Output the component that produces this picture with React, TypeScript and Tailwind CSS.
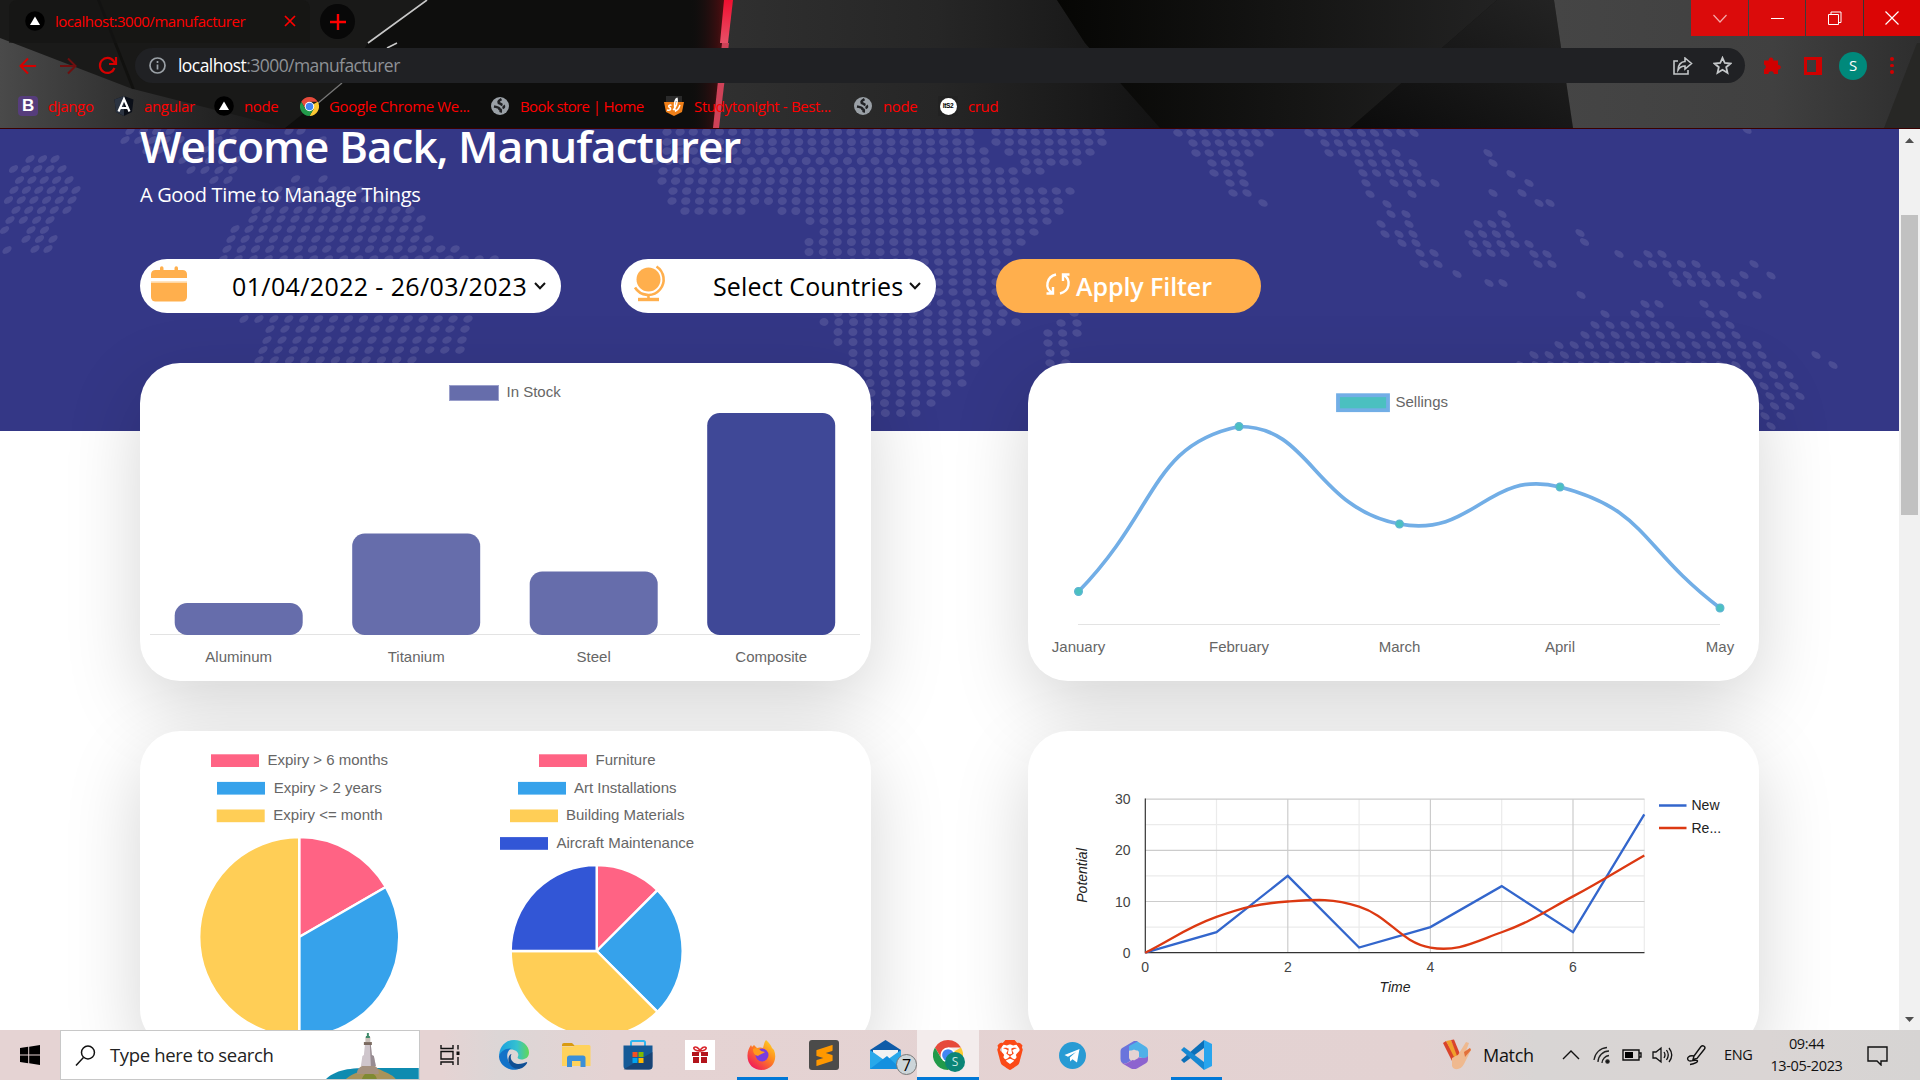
import React from "react";
import { FaBrave } from "react-icons/fa6";
import { SiSublimetext } from "react-icons/si";

type Pt = [number, number];

/* Rows of map dots: [y, first x, last x, count] */
const DOTS: [number, number, number, number][] = [
  [159, 30, 55, 3], [169, 13.5, 62, 5], [180, 19.5, 69, 5], [190, 14, 76, 6], [200, 8.5, 72, 6],
  [210, 16, 67, 5], [220, 10, 50, 4], [230, 4.5, 4.5, 1], [230, 31, 44.5, 2], [239, 26, 53, 3],
  [250, 7, 7, 1], [249, 35, 48, 2],
  [131, 130, 170, 4], [131, 222, 234, 2], [131, 289, 301, 2], [140, 125, 180, 5], [140, 218, 232, 2], [140, 322, 322, 1],
  [150, 147, 160, 2], [150, 205, 205, 1], [160, 183, 236, 5], [170, 191, 233, 4], [180, 214, 228, 2],
  [179, 295.5, 295.5, 1], [179, 323, 323, 1], [190, 278, 359, 7], [199, 262, 395, 10], [210, 256, 410, 12],
  [219, 253, 421, 13], [229, 235, 418, 14], [239, 231, 429, 15], [249, 227, 455, 17], [259, 223, 494, 19],
  [319, 244, 468, 16], [329, 270, 465, 14], [340, 267, 462, 14], [350, 263, 460, 14], [360, 259, 412, 11],
  [132, 667, 969, 24], [132, 996, 1100, 9], [142, 667, 970, 24], [142, 996, 1102, 9],
  [151, 667, 984, 25], [152, 1009, 1090, 7], [161, 655, 985, 25], [162, 1025, 1077, 5],
  [171, 663, 1040, 29], [181, 662, 1014, 27], [191, 673, 1070, 30], [201, 672, 1058, 29],
  [211, 685, 741, 5], [211, 782, 1059, 21], [221, 810, 1047, 18], [232, 824, 1034, 16],
  [242, 809, 1021, 16], [252, 809, 1008, 15], [262, 824, 996, 13], [272, 824, 996, 13], [282, 824, 996, 13],
  [292, 824, 996, 13], [303, 824, 1000, 13], [313, 838, 1003, 12], [313, 1074, 1074, 1],
  [322, 824, 1016, 14], [323, 1061, 1077, 2], [332, 838, 987, 11], [333, 1048, 1077, 3],
  [342, 838, 973, 10], [343, 1048, 1063, 2], [353, 853, 975, 9], [353, 1050, 1065, 2],
  [363, 853, 975, 9], [363, 1050, 1066, 2], [373, 868, 960, 7], [383, 870, 962, 7],
  [393, 871, 946, 6], [403, 869, 931, 5], [413, 870, 916, 4],
  [133, 1178, 1269, 8], [143, 1193, 1259, 6], [153, 1196, 1249, 5], [163, 1212, 1239, 3],
  [173, 1214, 1242, 3], [183, 1230, 1244, 2], [193, 1233, 1247, 2], [203, 1263, 1263, 1],
  [133, 1309, 1414, 9], [143, 1325, 1379, 5], [153, 1329, 1396, 6], [163, 1359, 1413, 5],
  [173, 1363, 1417, 5], [183, 1366, 1366, 1], [183, 1394, 1435, 4], [194, 1370, 1370, 1], [194, 1412, 1412, 1],
  [204, 1387, 1387, 1], [214, 1391, 1406, 2], [224, 1381, 1381, 1], [224, 1409, 1409, 1],
  [234, 1385, 1413, 3], [243, 1402, 1416, 2], [253, 1420, 1434, 2], [264, 1424, 1438, 2],
  [274, 1457, 1457, 1], [283, 1489, 1503, 2],
  [153, 1488, 1488, 1], [163, 1493, 1493, 1], [174, 1511, 1511, 1], [183, 1529, 1529, 1],
  [193, 1493, 1493, 1], [193, 1522, 1522, 1], [203, 1539, 1550, 2], [214, 1502, 1502, 1],
  [224, 1478, 1506, 3], [234, 1469, 1510, 4], [244, 1473, 1529, 5], [253, 1477, 1505, 3],
  [254, 1534, 1547, 2], [264, 1538, 1552, 2], [233, 1580, 1580, 1], [242, 1584.5, 1584.5, 1],
  [254, 1619, 1619, 1], [254, 1648, 1662, 2], [264, 1638, 1696, 5], [264, 1754, 1754, 1],
  [275, 1673, 1716, 4], [275, 1744, 1744, 1], [275.5, 1771, 1771, 1], [283, 1677, 1735, 5],
  [295, 1581, 1581, 1], [295, 1742, 1757, 2], [304, 1645, 1659, 2], [304, 1704, 1704, 1],
  [314, 1605, 1605, 1], [314, 1635, 1650, 2], [314, 1710, 1724, 2], [325, 1595, 1670, 6],
  [325, 1716, 1730, 2], [335, 1585, 1736, 11], [345, 1559, 1757, 14], [355, 1534, 1762, 16],
  [355, 1816, 1816, 1], [365, 1521, 1782, 18], [365, 1833, 1833, 1], [375, 1758, 1789, 3],
  [386, 1764, 1794, 3], [396, 1770, 1800, 3], [406, 1759, 1790, 3], [416, 1765, 1781, 2],
  [426, 1771, 1771, 1], [130, 1747, 1747, 1],
];

function WorldMap() {
  return (
    <svg className="absolute inset-0" width="1899" height="302" viewBox="0 129 1899 302">
      <g fill="#4b4d94">
        {DOTS.flatMap(([y, a, b, n], r) =>
          Array.from({ length: n }, (_, i) => {
            const x = n > 1 ? a + ((b - a) * i) / (n - 1) : a;
            const k = Math.max(-1, Math.min(1, (x - 830) / 560));
            return (
              <ellipse key={r + "-" + i} cx={x} cy={y} rx={4.5 + Math.abs(k) * 0.7} ry={4 - Math.abs(k) * 0.9} transform={`rotate(${k * 34} ${x} ${y})`} />
            );
          })
        )}
      </g>
    </svg>
  );
}

function ThemeArt() {
  return (
    <svg className="absolute inset-0" width="1920" height="128" viewBox="0 0 1920 128">
      <defs>
        <linearGradient id="g1"><stop offset="0" stopColor="#4a4a4a" /><stop offset="1" stopColor="#2c2c2c" /></linearGradient>
        <linearGradient id="g2"><stop offset="0" stopColor="#2f2f2f" /><stop offset="1" stopColor="#191919" /></linearGradient>
        <linearGradient id="g3"><stop offset="0" stopColor="#111" stopOpacity="0" /><stop offset="1" stopColor="#7a0c12" /></linearGradient>
        <linearGradient id="g4"><stop offset="0" stopColor="#303030" /><stop offset=".5" stopColor="#262626" /><stop offset="1" stopColor="#131313" /></linearGradient>
        <linearGradient id="g5"><stop offset="0" stopColor="#060604" /><stop offset="1" stopColor="#222222" /></linearGradient>
        <linearGradient id="g6" x1="0" x2="1" y1="1" y2="0"><stop offset="0" stopColor="#0b0b0b" /><stop offset="1" stopColor="#242424" /></linearGradient>
        <linearGradient id="g7"><stop offset="0" stopColor="#454545" /><stop offset=".6" stopColor="#404040" /><stop offset="1" stopColor="#2e2e2e" /></linearGradient>
        <linearGradient id="g8" x1="0" x2="0" y1="0" y2="1"><stop offset="0" stopColor="#f01030" /><stop offset="1" stopColor="#e85068" /></linearGradient>
      </defs>
      <rect width="1920" height="128" fill="#11110f" />
      <polygon points="100,0 427,0 368,43 330,128 150,128" fill="#191918" />
      <polygon points="0,0 97,0 147,128 0,128" fill="#1a1a19" />
      <polygon points="0,38 148,95 148,128 0,128" fill="url(#g1)" />
      <polygon points="133,89 282,127 282,128 147,128" fill="url(#g2)" />
      <polygon points="368,43 427,0 720,0 713,128 285,128 342,83" fill="#0e0e0d" />
      <path d="M427 0 368 43M397 43 387 48" stroke="#c8c8c8" strokeWidth="1.6" />
      <path d="M342 83 317 104" stroke="#777" strokeWidth="1.3" />
      <polygon points="690,0 728,0 715,128 690,128" fill="url(#g3)" opacity=".75" />
      <polygon points="728,0 1057,0 1085,43 1160,128 716,128" fill="url(#g4)" />
      <polygon points="724,0 733,0 728,43 720,43" fill="url(#g8)" />
      <polygon points="722,43 729,43 719,128 713,128" fill="#cf4258" />
      <polygon points="1057,0 1497,0 1350,128 1160,128 1085,43" fill="url(#g5)" />
      <polygon points="1497,0 1554,0 1573,128 1350,128" fill="url(#g6)" />
      <polygon points="1554,0 1920,0 1920,128 1573,128" fill="url(#g7)" />
      <polygon points="1917,43 1920,43 1920,128 1884,128" fill="#272725" />
    </svg>
  );
}

const NodeIcon = () => (
  <svg width="20" height="20" viewBox="0 0 20 20"><circle cx="10" cy="10" r="9.8" fill="#000" /><path d="M10 5.5 15 14H5Z" fill="#fff" /></svg>
);

const Globe = () => (
  <svg width="18" height="18" viewBox="0 0 18 18">
    <circle cx="9" cy="9" r="9" fill="#9aa0a6" />
    <path d="M10.5 2.200C8 3.500 7 4.500 7.800 6 9.500 6.300 9.800 7.500 11.500 8M3 9.500C6 10 8.500 10.500 8.500 12 10 12.500 10 14 9.500 15.500M11.500 11C13 10.500 13.500 9.500 12.500 8.500" stroke="#202124" strokeWidth="2.600" fill="none" />
  </svg>
);

function Chrome({ size }: { size: number }) {
  return (
    <svg width={size} height={size} viewBox="0 0 48 48">
      <path d="M24 24 44.800 12A24 24 0 0 1 24 48L34 30Z" fill="#fcc934" />
      <path d="M24 12H44.800A24 24 0 0 0 24 0 24 24 0 0 0 3.200 12L14 30Z" fill="#e64a3b" />
      <path d="M3.200 12A24 24 0 0 0 24 48L34.400 30 24 24 13.600 30Z" fill="#229a4a" />
      <circle cx="24" cy="24" r="12" fill="#fff" />
      <circle cx="24" cy="24" r="9.400" fill="#4285f4" />
    </svg>
  );
}

function TabStrip() {
  return (
    <div className="relative flex h-[43px]">
      <div className="ml-[9px] flex h-[43px] w-[301px] items-center rounded-t-lg bg-[#141413]/60 pb-px">
        <span className="ml-4"><NodeIcon /></span>
        <span className="ml-[10px] w-[229px] whitespace-nowrap text-[15px] tracking-[-0.480px] text-[#f00]">localhost:3000/manufacturer</span>
        <svg width="12" height="12" viewBox="0 0 12 12" stroke="#f00" strokeWidth="1.7"><path d="M1 1 11 11M11 1 1 11" /></svg>
      </div>
      <div className="ml-[10px] mt-1 flex size-[35px] items-center justify-center rounded-full bg-[#080808]">
        <svg width="16" height="16" viewBox="0 0 16 16" stroke="#f00" strokeWidth="2.4"><path d="M8 0V16M0 8H16" /></svg>
      </div>
      <div className="ml-auto flex h-9 gap-px">
        <div className="flex w-[57px] items-center justify-center bg-[#db0b0b]">
          <svg width="14" height="9" viewBox="0 0 14 9" fill="none" stroke="#f5a9a9" strokeWidth="1.2"><path d="M.5 1 7 8 13.500 1" /></svg>
        </div>
        <div className="flex w-[56px] items-center justify-center bg-[#db0b0b]"><div className="h-px w-[13px] bg-white" /></div>
        <div className="flex w-[57px] items-center justify-center bg-[#db0b0b]">
          <svg width="14" height="14" viewBox="0 0 14 14" fill="none" stroke="#fff"><path d="M.5 3.500H10.500V13.500H.5ZM3 3.500V1H13V11.500H10.500" /></svg>
        </div>
        <div className="flex w-[56px] items-center justify-center bg-[#db0505]">
          <svg width="14" height="14" viewBox="0 0 14 14" fill="none" stroke="#fff" strokeWidth="1.2"><path d="M.5.500 13.500 13.500M13.500.500.500 13.500" /></svg>
        </div>
      </div>
    </div>
  );
}

function Toolbar() {
  return (
    <div className="relative flex h-[45px] items-center">
      <svg className="ml-[18px]" width="20" height="20" viewBox="0 0 20 20" fill="none" stroke="#d60000" strokeWidth="2"><path d="M18 10H3M10 2.500 2.500 10 10 17.500" /></svg>
      <svg className="ml-[20px]" width="20" height="20" viewBox="0 0 20 20" fill="none" stroke="#6e0f0f" strokeWidth="2"><path d="M2 10H16M10 2.500 17.500 10 10 17.500" /></svg>
      <svg className="ml-[20px]" width="20" height="20" viewBox="0 0 20 20" fill="none" stroke="#d60000" strokeWidth="2.200"><path d="M16.500 12A7.500 7.500 0 1 1 15.500 5L17.500 7.500" /><path d="M18 1V8H11" /></svg>
      <div className="ml-[17px] flex h-[35px] w-[1610px] items-center rounded-full bg-[#202124]">
        <svg className="ml-[14px]" width="17" height="17" viewBox="0 0 17 17" fill="none" stroke="#9aa0a6" strokeWidth="1.700"><circle cx="8.500" cy="8.500" r="7.500" /><path d="M8.500 7.500V12.500M8.500 4V6" /></svg>
        <span className="ml-[12px] whitespace-nowrap text-[17.500px] tracking-[-0.560px] text-[#8e9196]"><span className="text-white">localhost</span>:3000/manufacturer</span>
        <svg className="ml-auto" width="20" height="18" viewBox="0 0 20 18" fill="none" stroke="#c4c7c9" strokeWidth="1.600"><path d="M5 4H1V17H15V13" /><path d="M12 1 18.500 6.500 12 12V9C8.500 9 6.500 10.500 5 13 5 8 8 4.500 12 4.500Z" /></svg>
        <svg className="ml-[20px] mr-[13px]" width="19" height="19" viewBox="0 0 19 19" fill="none" stroke="#c4c7c9" strokeWidth="1.800"><path d="M9.500 1.800 11.800 7 17.500 7.500 13.200 11.200 14.500 16.800 9.500 13.800 4.500 16.800 5.800 11.200 1.500 7.500 7.200 7Z" /></svg>
      </div>
      <svg className="ml-[18px]" width="19" height="19" viewBox="0 0 19 19" fill="#d00000"><path d="M1 4.500H5.800A2.300 2.300 0 1 1 10.200 4.500H15V9A2.300 2.300 0 1 1 15 13.500V18H10.800A2.500 2.500 0 0 0 5.500 18H1V13.300A2.500 2.500 0 0 0 1 8.500Z" /></svg>
      <div className="ml-[22px] h-[18px] w-[18px] border-[3px] border-r-[6px] border-[#d00000]" />
      <div className="ml-[17px] flex size-7 items-center justify-center rounded-full bg-[#00897b] text-[15px] text-white">S</div>
      <div className="ml-[23px] flex flex-col gap-[3px]">
        <i className="size-[3.500px] rounded-full bg-[#d00000]" /><i className="size-[3.500px] rounded-full bg-[#d00000]" /><i className="size-[3.500px] rounded-full bg-[#d00000]" />
      </div>
    </div>
  );
}

function Bookmarks() {
  const item = "flex items-center gap-[10px] whitespace-nowrap";
  return (
    <div className="relative flex h-[36px] items-center pl-[18px] text-[15px] tracking-[-0.350px] text-[#f00]">
      <div className={item + " w-[96px]"}>
        <span className="flex size-5 items-center justify-center rounded bg-[#563d7c] font-['Liberation_Sans'] text-[17px] font-bold text-white">B</span>django
      </div>
      <div className={item + " w-[100px]"}>
        <svg width="20" height="20" viewBox="0 0 20 20"><path d="M10 0 19.500 3.500 18 16 10 20 2 16 .500 3.500Z" fill="#0b0f18" /><path d="M10 0V20L2 16 .500 3.500Z" fill="#2b3340" /><path d="M4.500 15.500 10 3 15.500 15.500M6.500 12H13.500" fill="none" stroke="#fff" strokeWidth="2.200" /></svg>angular
      </div>
      <div className={item + " w-[86px]"}><NodeIcon />node</div>
      <div className={item + " w-[191px]"}><Chrome size={19} />Google Chrome We...</div>
      <div className={item + " w-[173px] gap-[11px] tracking-[-0.620px]"}><Globe />Book store | Home</div>
      <div className={item + " w-[190px]"}>
        <svg width="20" height="20" viewBox="0 0 20 20"><path d="M2 0H18V6H2Z" fill="#2a2a2a" /><path d="M0 6H20L18 16 10 20 2 16Z" fill="#f08019" /><path d="M3 14C8 15 7 12 5 11 4 9.500 6 8.500 7.500 9.500M9 14C12 12 14 6 13 2.500 10 4 10 12 11.500 15 14 14 15 12 16 9" stroke="#fff" strokeWidth="1.500" fill="none" /></svg>Studytonight - Best...
      </div>
      <div className={item + " w-[84px] gap-[11px]"}><Globe />node</div>
      <div className={item}>
        <span className="flex size-5 items-center justify-center bg-[#222]"><span className="flex size-[17px] items-center justify-center rounded-full bg-white font-['Liberation_Sans'] text-[6.500px] font-bold text-black">ItS2</span></span>crud
      </div>
    </div>
  );
}

const Chevron = () => (
  <svg width="12" height="8" viewBox="0 0 12 8" fill="none" stroke="#111" strokeWidth="2"><path d="M1 1 6 6.300 11 1" /></svg>
);

function Filters() {
  return (
    <div className="flex gap-[60px]">
      <div className="flex h-[54px] w-[421px] items-center rounded-[27px] bg-white">
        <svg className="-mt-[5px] ml-[11px]" width="36" height="36" viewBox="0 0 36 36" fill="#ffaf4d">
          <path d="M0 12V8A4.500 4.500 0 0 1 4.500 4H9V2A1.700 1.700 0 0 1 12.500 2V4H23.500V2A1.700 1.700 0 0 1 27 2V4H31.500A4.500 4.500 0 0 1 36 8V12Z" />
          <path d="M0 16.500H36V31A4.500 4.500 0 0 1 31.500 35.500H4.500A4.500 4.500 0 0 1 0 31Z" /><path d="M0 15.800H36" stroke="#ffd9a8" />
        </svg>
        <span className="ml-[45px] w-[302px] whitespace-nowrap pt-[2px] text-[25px] font-medium tracking-[0.380px] text-black">01/04/2022 - 26/03/2023</span>
        <Chevron />
      </div>
      <div className="flex h-[54px] w-[315px] items-center rounded-[27px] bg-white">
        <svg className="-mt-[5px] ml-[12px]" width="34" height="37" viewBox="0 0 34 37" fill="none" stroke="#ffaf4d" strokeWidth="2.600">
          <circle cx="15.500" cy="14.500" r="12" fill="#ffaf4d" stroke="none" />
          <path d="M23.500 1.500A15.500 15.500 0 0 1 27 24.500 15.500 15.500 0 0 1 2 22.500M15.500 29V34" /><path d="M5 34.500H26" strokeWidth="3.400" />
        </svg>
        <span className="ml-[46px] w-[196px] whitespace-nowrap pt-[2px] text-[25px] font-medium tracking-[0.120px] text-black">Select Countries</span>
        <Chevron />
      </div>
      <div className="flex h-[54px] w-[265px] items-center rounded-[27px] bg-[#ffaf4d]">
        <svg className="-mt-1 ml-[49px]" width="26" height="22" viewBox="0 0 26 22" fill="none" stroke="#fff" strokeWidth="2.400">
          <path d="M11 1.500C1 4 0 15 6.500 19.500M1.500 20.500H8V14M15 20.500C25 18 26 7 19.500 2.500M24.500 1.500H18V8" />
        </svg>
        <span className="ml-[5px] whitespace-nowrap pt-[2px] text-[25px] font-semibold tracking-[-0.080px] text-white">Apply Filter</span>
      </div>
    </div>
  );
}

const CARD = "h-[318px] w-[731px] shrink-0 overflow-hidden rounded-[40px] bg-white shadow-[0_25px_75px_rgba(0,0,0,0.17)]";

function StockCard() {
  const bars = [
    { label: "Aluminum", x: 174.700, top: 603, color: "#666dab" },
    { label: "Titanium", x: 352.200, top: 533.500, color: "#666dab" },
    { label: "Steel", x: 529.700, top: 571.500, color: "#666dab" },
    { label: "Composite", x: 707.200, top: 413, color: "#3f4897" },
  ];
  return (
    <section className={CARD}>
      <svg width="731" height="318" viewBox="140 363 731 318" className="font-['Liberation_Sans',sans-serif]" fontSize="15" fill="#666">
        <rect x="449.500" y="385.500" width="49" height="15" fill="#666dab" stroke="#9a9fcb" />
        <text x="506.500" y="397">In Stock</text>
        <path d="M150 634.500H860" stroke="#e3e3e3" strokeWidth="1.200" />
        {bars.map((b) => (
          <g key={b.label}>
            <rect x={b.x} y={b.top} width="128" height={635 - b.top} rx="12.500" fill={b.color} />
            <text x={b.x + 64} y="662" textAnchor="middle">{b.label}</text>
          </g>
        ))}
      </svg>
    </section>
  );
}

/* Cubic spline with distance-weighted control points, kept inside [minY, maxY]. */
function spline(p: Pt[], tension: number, minY: number, maxY: number) {
  const clamp = (v: number) => Math.max(minY, Math.min(maxY, v));
  const cps = p.map((c, i) => {
    const a = p[Math.max(0, i - 1)];
    const b = p[Math.min(p.length - 1, i + 1)];
    const d0 = Math.hypot(c[0] - a[0], c[1] - a[1]);
    const d1 = Math.hypot(b[0] - c[0], b[1] - c[1]);
    const fa = (tension * d0) / (d0 + d1);
    const fb = (tension * d1) / (d0 + d1);
    return {
      before: [c[0] - fa * (b[0] - a[0]), clamp(c[1] - fa * (b[1] - a[1]))],
      after: [c[0] + fb * (b[0] - a[0]), clamp(c[1] + fb * (b[1] - a[1]))],
    };
  });
  let d = `M${p[0][0]} ${p[0][1]}`;
  for (let i = 1; i < p.length; i++) {
    d += `C${cps[i - 1].after.join(" ")} ${cps[i].before.join(" ")} ${p[i].join(" ")}`;
  }
  return d;
}

function SellingsCard() {
  const pts: Pt[] = [[1078.500, 591.500], [1239, 426.500], [1399.500, 524], [1560, 487], [1720, 608]];
  const months = ["January", "February", "March", "April", "May"];
  return (
    <section className={CARD}>
      <svg width="731" height="318" viewBox="1028 363 731 318" className="font-['Liberation_Sans',sans-serif]" fontSize="15" fill="#666">
        <rect x="1338" y="395.200" width="50" height="15" fill="#4bc0c0" stroke="#72aee6" strokeWidth="3.800" />
        <text x="1395.500" y="407">Sellings</text>
        <path d="M1078 624.500H1720" stroke="#e3e3e3" strokeWidth="1.200" />
        <path d={spline(pts, 0.5, 426, 624)} fill="none" stroke="#72aee6" strokeWidth="3.700" />
        {pts.map(([x, y], i) => (
          <g key={x}>
            <circle cx={x} cy={y} r="3.900" fill="#4bc0c0" stroke="#5fb4d4" strokeWidth="1.200" />
            <text x={x} y="652" textAnchor="middle">{months[i]}</text>
          </g>
        ))}
      </svg>
    </section>
  );
}

type Slice = { label: string; color: string; to: number; box: number; text: number };

function Pie({ cx, cy, r, slices }: { cx: number; cy: number; r: number; slices: Slice[] }) {
  const at = (deg: number) => {
    const t = ((deg - 90) * Math.PI) / 180;
    return `${cx + r * Math.cos(t)} ${cy + r * Math.sin(t)}`;
  };
  return (
    <g>
      {slices.map((s, i) => {
        const from = i ? slices[i - 1].to : 0;
        const to = s.to === 360 ? 359.999 : s.to;
        const y = 754 + i * 27.600;
        return (
          <g key={s.label}>
            <rect x={s.box} y={y + 0.300} width="48" height="12.700" fill={s.color} />
            <text x={s.text} y={y + 11}>{s.label}</text>
            <path d={`M${cx} ${cy}L${at(from)}A${r} ${r} 0 ${to - from > 180 ? 1 : 0} 1 ${at(to)}Z`} fill={s.color} stroke="#fff" strokeWidth="2.400" strokeLinejoin="round" />
          </g>
        );
      })}
    </g>
  );
}

function PiesCard() {
  return (
    <section className={CARD}>
      <svg width="731" height="318" viewBox="140 731 731 318" className="font-['Liberation_Sans',sans-serif]" fontSize="15" fill="#666">
        <Pie cx={299.200} cy={937} r={100} slices={[
          { label: "Expiry > 6 months", color: "#ff6384", to: 60, box: 211, text: 267.500 },
          { label: "Expiry > 2 years", color: "#36a2eb", to: 180, box: 217, text: 273.700 },
          { label: "Expiry <= month", color: "#ffce56", to: 360, box: 216.700, text: 273.300 },
        ]} />
        <Pie cx={596.700} cy={951} r={86} slices={[
          { label: "Furniture", color: "#ff6384", to: 45, box: 539, text: 595.500 },
          { label: "Art Installations", color: "#36a2eb", to: 135, box: 518, text: 574 },
          { label: "Building Materials", color: "#ffce56", to: 270, box: 510, text: 566 },
          { label: "Aircraft Maintenance", color: "#3256d6", to: 360, box: 500, text: 556.500 },
        ]} />
      </svg>
    </section>
  );
}

function PotentialCard() {
  const X = (v: number) => 1145.200 + v * 71.300;
  const Y = (v: number) => 952.700 - v * 5.120;
  const a: Pt[] = [0, 4, 15, 1, 5, 13, 4, 27].map((v, i) => [X(i), Y(v)]);
  const b: Pt[] = [0, 7, 10, 9, 1, 4, 11, 19].map((v, i) => [X(i), Y(v)]);
  return (
    <section className={CARD}>
      <svg width="731" height="318" viewBox="1028 731 731 318" className="font-['Liberation_Sans',sans-serif]" fontSize="14" fill="#444">
        <g fill="none" strokeWidth="1.200">
          <path stroke="#ebebeb" d={[1, 3, 5, 7].map((v) => `M${X(v)} 799V952`).join("") + [5, 15, 25].map((v) => `M1145 ${Y(v)}H1644.500`).join("")} />
          <path stroke="#ccc" d={[2, 4, 6].map((v) => `M${X(v)} 799V952`).join("") + [10, 20, 30].map((v) => `M1145 ${Y(v)}H1644.500`).join("")} />
          <path stroke="#333" d="M1145.300 798.500V952.700H1644.500" />
          <path stroke="#3366cc" strokeWidth="2.300" d={"M" + a.map((q) => q.join(" ")).join("L")} />
          <path stroke="#dc3912" strokeWidth="2.300" d={spline(b, 0.4, 799, 952.700)} />
          <path stroke="#3366cc" strokeWidth="2.500" d="M1659 805.500H1686.500" />
          <path stroke="#dc3912" strokeWidth="2.500" d="M1659 828H1686.500" />
        </g>
        {[0, 10, 20, 30].map((v) => <text key={v} x="1130.500" y={Y(v) + 5} textAnchor="end">{v}</text>)}
        {[0, 2, 4, 6].map((v) => <text key={v} x={X(v)} y="972" textAnchor="middle">{v}</text>)}
        <g fill="#222">
          <text x="1691.500" y="810" textLength="28">New</text>
          <text x="1691.500" y="833">Re...</text>
          <text x="1395" y="991.500" textAnchor="middle" fontStyle="italic">Time</text>
          <text transform="translate(1087 875.500) rotate(-90)" textAnchor="middle" fontStyle="italic">Potential</text>
        </g>
      </svg>
    </section>
  );
}

function Page() {
  return (
    <main className="flex h-[901px] overflow-hidden bg-white">
      <div className="relative w-[1899px] shrink-0 overflow-hidden">
        <div className="absolute left-0 top-0 h-[302px] w-full bg-[#343786]"><WorldMap /></div>
        <div className="relative pl-[140px]">
          <h1 className="h-[51px] whitespace-nowrap text-[44px] font-semibold leading-[34px] tracking-[-0.970px] text-white">Welcome Back, Manufacturer</h1>
          <p className="h-[79px] whitespace-nowrap text-[20px] leading-[30px] tracking-[-0.340px] text-white">A Good Time to Manage Things</p>
          <Filters />
          <div className="mt-[50px] grid w-[1619px] grid-cols-[731px_731px] justify-between gap-y-[50px]">
            <StockCard /><SellingsCard /><PiesCard /><PotentialCard />
          </div>
        </div>
      </div>
      <div className="flex w-[21px] flex-col items-center bg-[#f1f1f1]">
        <svg className="mt-[9px]" width="9" height="5" viewBox="0 0 9 5" fill="#505050"><path d="M0 5 4.500 0 9 5Z" /></svg>
        <div className="mt-[72px] h-[300px] w-[17px] bg-[#c1c1c1]" />
        <svg className="mb-[8px] mt-auto" width="9" height="5" viewBox="0 0 9 5" fill="#505050"><path d="M0 0 4.500 5 9 0Z" /></svg>
      </div>
    </main>
  );
}

function Lighthouse() {
  return (
    <svg width="93" height="48" viewBox="0 0 93 48">
      <path d="M0 48C12 37 28 37 50 37H93V48Z" fill="#0f8bb0" />
      <path d="M20 48C28 41 34 42 40 38H53C60 42 66 43 70 48Z" fill="#a8935a" />
      <path d="M36 48C38 43 40 42 43 42 47 42 50 44 51 48Z" fill="#7f8a32" />
      <path d="M31 43C31 38 34 36 36 35H49C51 36 53 38 53 43Z" fill="#a5917f" />
      <path d="M35 35 36.500 25 38 24 39 14H45L46 24 48 25 50 35Z" fill="#cfc6cc" />
      <path d="M44 14H45L46 24 48 25 50 35H45Z" fill="#988c92" />
      <path d="M38 14V11H46V14Z" fill="#7b6a60" /><path d="M39.500 11V6H44.500V11Z" fill="#c9bfb8" /><path d="M42 6V2M40 6H44" stroke="#3f8a6a" strokeWidth="2" />
    </svg>
  );
}

function Slot({ children, active, running }: { children: React.ReactNode; active?: boolean; running?: boolean }) {
  return (
    <div className={"relative flex h-full w-[62px] shrink-0 items-center justify-center " + (active ? "bg-[#f3ecec]" : "")}>
      {children}
      {(active || running) && <i className={"absolute bottom-0 h-[3px] bg-[#0078d7] " + (active ? "w-full" : "w-[51px]")} />}
    </div>
  );
}

function Taskbar() {
  return (
    <footer className="flex h-[50px] items-center bg-[linear-gradient(90deg,#e5d3d3_0%,#e5d3d3_23%,#dcd6d6_26%,#e5d3d3_32%,#e3d2d2_74%,#d8d5d4_80%,#dad5d4_92%,#d6d4d3_100%)]">
      <div className="flex w-[60px] justify-center">
        <svg width="20" height="20" viewBox="0 0 20 20"><path d="M0 3 8.200 1.800V9.500H0ZM9.200 1.700 20 0V9.500H9.200ZM0 10.500H8.200V18.200L0 17ZM9.200 10.500H20V20L9.200 18.300Z" /></svg>
      </div>
      <div className="flex h-full w-[360px] items-center border border-[#c8c8c8] bg-white">
        <svg className="ml-[14px]" width="21" height="21" viewBox="0 0 21 21" fill="none" stroke="#111" strokeWidth="1.500"><circle cx="13" cy="7.500" r="6.500" /><path d="M8.500 12.500 1 20.500" /></svg>
        <span className="ml-[14px] w-[217px] whitespace-nowrap text-[18.500px] tracking-[-0.350px] text-[#222]">Type here to search</span>
        <Lighthouse />
      </div>
      <div className="flex w-[63px] pl-[20px]">
        <svg width="20" height="20" viewBox="0 0 20 20" fill="none" stroke="#111" strokeWidth="1.400"><path d="M1 0V3.500H13V0M1 6.500H13V14H1ZM1 20V17H13V20M18 0V4.500M18 12V20" /><path d="M16.500 6.500H19.500V10H16.500Z" fill="#111" stroke="none" /></svg>
      </div>
      <Slot>
        <svg width="30" height="30" viewBox="0 0 30 30">
          <defs><linearGradient id="e1"><stop offset="0" stopColor="#1a9fe0" /><stop offset=".6" stopColor="#35c1d0" /><stop offset="1" stopColor="#62d856" /></linearGradient></defs>
          <path d="M15 0C24 0 30 6 30 12.500 30 17.500 26 19.500 22.500 19.500 19 19.500 18 18 19 16.500 20.500 13 17 9.500 12 9.500 6 9.500 1 13 0 17 0 7 6 0 15 0Z" fill="url(#e1)" />
          <path d="M0 16C2 10.500 7 8.500 12 8.500 8 11 7.500 16 9 20 11 26 17 29 21 28.500 18 30 12 30.500 8 28 3 25.500 0 21 0 16Z" fill="#1272c8" />
          <path d="M12.500 14C10 19 14 24 19 24 23 24 26 22.500 28 22 29 23 25 28 20 29 13 29 8.500 23 9.500 18 10 15.500 11.500 14 12.500 14Z" fill="#104f94" />
        </svg>
      </Slot>
      <Slot>
        <svg width="29" height="24" viewBox="0 0 29 24"><path d="M0 2A2 2 0 0 1 2 0H10L13 3H0Z" fill="#d99a10" /><path d="M0 3.500H11L13.500 2H27A1.500 1.500 0 0 1 28.500 3.500V23H0Z" fill="#ffd25c" /><path d="M5 24V15A2.500 2.500 0 0 1 7.500 12.500H21A2.500 2.500 0 0 1 23.500 15V24H18.500V18H10V24Z" fill="#3b8fd8" /></svg>
      </Slot>
      <Slot>
        <svg width="30" height="30" viewBox="0 0 30 30"><path d="M8 7V2.500A1.500 1.500 0 0 1 9.500 1H20.500A1.500 1.500 0 0 1 22 2.500V7" fill="none" stroke="#2fb6f0" strokeWidth="2" /><path d="M0.500 5.500H29.500V26A3.500 3.500 0 0 1 26 29.500H4A3.500 3.500 0 0 1 .500 26Z" fill="#155a97" /><path d="M.500 29.500 29.500 12V26A3.500 3.500 0 0 1 26 29.500Z" fill="#1b3a66" opacity=".7" /><path d="M9.500 12H14.500V17H9.500Z" fill="#f25022" /><path d="M15.500 12H20.500V17H15.500Z" fill="#7fba00" /><path d="M9.500 18H14.500V23H9.500Z" fill="#00a4ef" /><path d="M15.500 18H20.500V23H15.500Z" fill="#ffb900" /></svg>
      </Slot>
      <Slot>
        <svg width="30" height="30" viewBox="0 0 30 30"><rect width="30" height="30" fill="#fff" /><path d="M7 12H14V16H7ZM16 12H23V16H16ZM8 17H14V23H8ZM16 17H22V23H16Z" fill="#b3141c" /><path d="M15 11C11 11 8 9 9 7.500 10.500 6 14 8 15 11 16 8 19.500 6 21 7.500 22 9 19 11 15 11Z" fill="none" stroke="#d8232a" strokeWidth="1.600" /></svg>
      </Slot>
      <Slot running>
        <svg width="30" height="30" viewBox="0 0 30 30">
          <defs><linearGradient id="f1" x1="1" y1="0" x2=".2" y2="1"><stop offset="0" stopColor="#ffe226" /><stop offset=".45" stopColor="#ff8a1e" /><stop offset="1" stopColor="#f0125f" /></linearGradient></defs>
          <path d="M19 0C22 3 24 5 25 8L27 10C31 20 25 30 15 30 6 30 0 24 .500 15 .500 11 2 8 4 5L5 7 7 5 10 8C12 7 15 7.500 16 8 17 5 17 2 19 0Z" fill="url(#f1)" />
          <circle cx="15" cy="15" r="6.500" fill="#7a3be0" /><path d="M6 9C9 7 12 8 14 11L18 12C16 14 13 14 11 16 7 15 6 12 6 9Z" fill="#ff9a1c" />
        </svg>
      </Slot>
      <Slot><span className="flex size-[30px] items-center justify-center rounded-[3px] bg-[#4b4b4a]"><SiSublimetext size={21} color="#ff9800" /></span></Slot>
      <Slot>
        <svg width="32" height="30" viewBox="0 0 32 30"><path d="M0 10 15.500 0 31 10V14H0Z" fill="#0f5ba8" /><path d="M3 10H28V22H3Z" fill="#f2f2f2" /><path d="M0 10 15.500 21 31 10V29H0Z" fill="#28a8ea" /><path d="M0 29 17 16 31 29Z" fill="#1490df" /></svg>
        <span className="absolute left-[41px] top-[24px] flex size-[21px] items-center justify-center rounded-full border border-[#777] bg-[#ccd5d9] text-[16px] text-black">7</span>
      </Slot>
      <Slot active>
        <Chrome size={30} />
        <span className="absolute left-[28px] top-[22px] flex size-[20px] items-center justify-center rounded-full bg-[#0b8577] text-[12px] text-[#c9e8e2]">S</span>
      </Slot>
      <Slot>
        <span className="relative flex items-center justify-center">
          <i className="absolute h-[22px] w-[17px] rounded-b-full bg-white" />
          <FaBrave className="relative" size={30} color="#fb4a17" />
        </span>
      </Slot>
      <Slot>
        <svg width="27" height="27" viewBox="0 0 27 27"><circle cx="13.500" cy="13.500" r="13.500" fill="#289bd4" /><path d="M5.500 13 20.500 7 18 20.500 13.500 17.300 11.200 19.500 10.800 15.500 17 10 9 14.700Z" fill="#fff" /></svg>
      </Slot>
      <Slot>
        <svg width="28" height="28" viewBox="0 0 28 28">
          <path d="M14 0 3 6.500C1 7.500 .500 8.500 .500 10.500V18C.500 22 4 23.500 7 22L11 19.500C9.500 18.500 9 17.500 9 16V9.500L18 4.500V1C17 -.200 15.500 -.600 14 0Z" fill="#6a74dc" />
          <path d="M17.500 .500 25.500 5.500C27.500 7 28 8 28 10V16C26 17.500 22 17.500 19 16V12C19 11 18.500 10 17.500 9.500L9 9.500V5Z" fill="#4fb0e8" />
          <path d="M28 15V18.500C28 20.500 27 21.500 25.500 22.500L17 27.500C15 28.500 13 28.500 11 27.500L5 24C3 23 2 22 1.500 21 4 23 6 22.500 8 21.500L18 16C22 17.500 26 17.500 28 15Z" fill="#8d63cf" />
          <path d="M9.500 11 14 8.500 18.500 11V17L14 19.500 9.500 17Z" fill="#e4d3d3" />
        </svg>
      </Slot>
      <Slot running>
        <svg width="31" height="30" viewBox="0 0 31 30"><path d="M23 0 31 4V26L23 30Z" fill="#28a5ee" /><path d="M23 0 0 20 3 23 23 8Z" fill="#0b6fb8" /><path d="M0 10 3 7 23 22V30Z" fill="#1688d2" /></svg>
      </Slot>
      <div className="ml-[215px] flex items-center">
        <svg width="29" height="32" viewBox="0 0 29 32">
          <path d="M1 4 4 2 13 17 10 22Z" fill="#d9442b" /><path d="M4 2 9 1 16 17 12 18Z" fill="#f0a02c" /><path d="M9 1 12 .500 18 15 15 17Z" fill="#d9442b" />
          <path d="M10 19 16 16 24 3 27 4 24 12 28 9 29 11 22 25C19 31 12 32 10 27Z" fill="#efb98f" /><path d="M22 13 28 9 29 11 23 18Z" fill="#e2703a" />
        </svg>
        <span className="ml-[12px] w-[79px] text-[18px] tracking-[-0.300px] text-[#111]">Match</span>
      </div>
      <svg width="18" height="10" viewBox="0 0 18 10" fill="none" stroke="#111" strokeWidth="1.400"><path d="M1 9 9 1 17 9" /></svg>
      <svg className="ml-[13px]" width="18" height="18" viewBox="0 0 18 18" fill="none" stroke="#222" strokeWidth="1.300"><path d="M1 14A14 14 0 0 1 14 1.500M5 16A11 11 0 0 1 16 5M9 17A8 8 0 0 1 16 9.500" /><circle cx="14.500" cy="15.500" r="1.600" fill="#111" /></svg>
      <svg className="ml-[11px]" width="20" height="12" viewBox="0 0 20 12"><path d="M1 1H17V11H1ZM17 4H19V8H17" fill="none" stroke="#111" strokeWidth="1.400" /><path d="M3 3H11V9H3Z" /></svg>
      <svg className="ml-[10px]" width="21" height="18" viewBox="0 0 21 18" fill="none" stroke="#111" strokeWidth="1.300"><path d="M1 6H4L9 2V16L4 12H1ZM12 6Q14 9 12 12M14.500 4Q18 9 14.500 14M17 2Q22.500 9 17 16" /></svg>
      <svg className="ml-[13px]" width="22" height="22" viewBox="0 0 22 22" fill="none" stroke="#111" strokeWidth="1.400"><path d="M8 12 15 2.500C17 .500 20 3 18.500 5L11 14.500 7 15.500ZM8 12C3 11 0 14 2.500 16.500 5 18 8 15.500 11 16.500 13 17.500 9 20 4 20.500" /></svg>
      <span className="ml-[16px] w-[40px] text-[14.500px] tracking-[-0.300px] text-[#111]">ENG</span>
      <div className="w-[85px] text-center text-[14.500px] leading-[22px] tracking-[-0.350px] text-[#111]">09:44<br />13-05-2023</div>
      <svg className="ml-[18px]" width="21" height="21" viewBox="0 0 21 21" fill="none" stroke="#111" strokeWidth="1.400"><path d="M1 2H20V16H14V20L10 16H1Z" /></svg>
    </footer>
  );
}

export default function App() {
  return (
    <div className="h-[1080px] w-[1920px] overflow-hidden bg-white font-['Open_Sans','Noto_Sans',sans-serif]">
      <header className="relative h-[129px] overflow-hidden border-b border-[#3a0000] bg-[#11110f]">
        <ThemeArt />
        <TabStrip />
        <Toolbar />
        <Bookmarks />
      </header>
      <Page />
      <Taskbar />
    </div>
  );
}
